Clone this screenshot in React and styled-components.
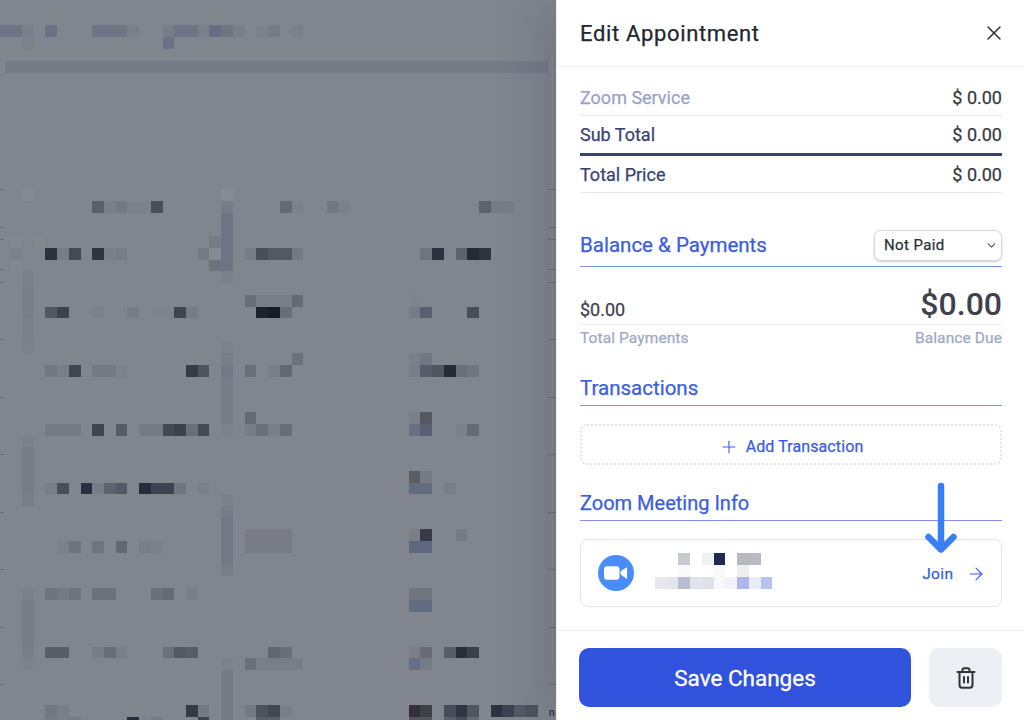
import React from "react";
import styled, { createGlobalStyle } from "styled-components";
import { ChevronDown, Plus, ArrowRight, X } from "lucide-react";

const Global = createGlobalStyle`
  html, body { margin: 0; padding: 0; height: 100%; overflow: hidden; }
  * { box-sizing: border-box; }
  body { font-family: Roboto, "Liberation Sans", sans-serif; background: #fff; -webkit-text-stroke: 0.25px currentColor; }
`;

const Page = styled.div`
  display: flex;
  width: 1024px;
  height: 720px;
  overflow: hidden;
`;
const Backdrop = styled.svg`
  display: block;
  flex: 0 0 556px;
  width: 556px;
  height: 720px;
  background: #81858e;
`;
const Panel = styled.aside`
  position: relative;
  flex: 0 0 468px;
  height: 720px;
  display: flex;
  flex-direction: column;
  background: #fff;
  border-left: 1px solid #eeeef0;
  box-shadow: -12px 0 48px rgba(30, 32, 50, 0.16);
`;
const Header = styled.header`
  flex: 0 0 67px;
  display: flex;
  align-items: center;
  justify-content: space-between;
  padding: 0 18px 0 23px;
  border-bottom: 1px solid #f1f2f4;
`;
const Title = styled.h1`
  margin: 0;
  font-size: 22px;
  font-weight: 400;
  letter-spacing: 0.65px;
  color: #23272e;
`;
const CloseButton = styled.button`
  display: flex;
  padding: 0;
  border: 0;
  background: none;
  color: #2b2f36;
`;
const Body = styled.div`
  flex: 1;
  padding: 12px 22px 0 23px;
`;
const PriceRow = styled.div`
  display: flex;
  align-items: center;
  justify-content: space-between;
  height: ${(p) => p.$h}px;
  font-size: 18px;
  font-weight: 400;
  color: ${(p) => p.$color};
  border-bottom: ${(p) => p.$rule};
`;
const Amount = styled.span`
  color: #363a42;
`;
const SectionHead = styled.div`
  display: flex;
  align-items: center;
  justify-content: space-between;
  height: ${(p) => p.$h}px;
  margin-top: ${(p) => p.$top}px;
  padding: ${(p) => p.$padTop}px 0 0;
  border-bottom: 1px solid #7a93ee;
  color: #3a5de0;
  font-size: ${(p) => p.$size}px;
  font-weight: 400;
`;
const StatusSelect = styled.div`
  width: 128px;
  height: 31px;
  display: flex;
  align-items: center;
  justify-content: space-between;
  padding: 0 3px 0 9px;
  border: 1px solid #d6d7dd;
  border-radius: 7px;
  box-shadow: 0 1px 2px rgba(40, 44, 60, 0.25);
  color: #2c3036;
  font-size: 15px;
  font-weight: 400;
  letter-spacing: 0.4px;
`;
const Totals = styled.div`
  display: flex;
  align-items: flex-end;
  justify-content: space-between;
  height: 58px;
  border-bottom: 1px solid #f0f1f3;
  color: #3d424c;
`;
const PaidAmount = styled.span`
  font-size: 18px;
  margin-bottom: 4px;
`;
const DueAmount = styled.span`
  font-size: 32px;
  font-weight: 500;
  line-height: 38px;
  margin-bottom: 1px;
  -webkit-text-stroke: 0;
`;
const Captions = styled.div`
  display: flex;
  justify-content: space-between;
  align-items: center;
  height: 28px;
  padding-bottom: 2px;
  color: #a0a8c8;
  font-size: 15.5px;
  font-weight: 400;
  letter-spacing: 0.1px;
`;
const AddBox = styled.div`
  display: flex;
  align-items: center;
  justify-content: center;
  gap: 7px;
  height: 41px;
  margin-top: 18px;
  padding: 4px 0 0 0;
  border: 2px dotted #e2e3e7;
  border-radius: 7px;
  color: #3a5de0;
  font-size: 16px;
  font-weight: 400;
  letter-spacing: 0.1px;
`;
const MeetingCard = styled.div`
  position: relative;
  display: flex;
  align-items: center;
  height: 68px;
  margin-top: 18px;
  padding: 0 17px;
  border: 1.5px solid #e4e5e9;
  border-radius: 8px;
`;
const ZoomBadge = styled.svg`
  flex: 0 0 36px;
  width: 36px;
  height: 36px;
`;
const BlurredName = styled.svg`
  flex: 0 0 118px;
  width: 118px;
  height: 36px;
  margin-left: 21px;
  margin-top: -5px;
`;
const JoinLink = styled.div`
  display: flex;
  align-items: center;
  gap: 12px;
  margin: 1px -1.5px 0 auto;
  color: #3a5de0;
  font-size: 15.5px;
  font-weight: 400;
  letter-spacing: 0.4px;
`;
const Pointer = styled.svg`
  position: absolute;
  left: 336px;
  top: -58px;
  width: 48px;
  height: 74px;
`;
const Footer = styled.footer`
  flex: 0 0 90px;
  display: flex;
  gap: 18px;
  padding: 17px 22px 13px 22px;
  border-top: 1px solid #f0f1f3;
`;
const SaveButton = styled.button`
  flex: 1;
  border: 0;
  border-radius: 10px;
  background: #3152dc;
  color: #fff;
  font: 400 22.5px Roboto, "Liberation Sans", sans-serif;
  -webkit-text-stroke: 0.3px #fff;
`;
const TrashButton = styled.button`
  flex: 0 0 73px;
  display: flex;
  align-items: center;
  justify-content: center;
  border: 0;
  border-radius: 10px;
  background: #eeeff4;
  color: #2f333b;
`;
const ClippedGlyph = styled.text`
  font: 500 10px Roboto, sans-serif;
  fill: #2a2e3a;
`;

const BG_CELLS = [
  [-15,-4,"#707586"],[-15,-3,"#707586"],[-15,-2,"#7b7f8b"],[-15,0,"#6c7186"],[-15,4,"#707586"],[-15,5,"#707586"],[-15,6,"#707586"],[-15,7,"#7b7f8b"],
  [-15,10,"#787d8a"],[-15,11,"#707586"],[-15,12,"#707586"],[-15,13,"#7b7f8b"],[-15,14,"#686d83"],[-15,15,"#707586"],[-15,16,"#7b7f8b"],[-15,18,"#7e818c"],[-15,19,"#767a89"],[-15,21,"#7c808b"],
  [-14,-2,"#7e828c"],[-14,10,"#6c7186"],
  [-1,-2,"#868a92"],[-1,15,"#888b93"],
  [0,4,"#5c5f69"],[0,5,"#7a7e87"],[0,6,"#747882"],[0,7,"#7e8189"],[0,8,"#7e8189"],[0,9,"#484d58"],[0,15,"#767b89"],[0,20,"#666a73"],[0,21,"#7d818a"],[0,24,"#747781"],[0,25,"#7d8089"],[0,37,"#5f626c"],[0,38,"#787b85"],[0,39,"#7a7c86"],
  [1,15,"#6f7484"],[2,15,"#6f7484"],
  [3,-3,"#84878f"],[3,-1,"#84878e"],[3,14,"#777b84"],[3,15,"#6f7484"],
  [4,-3,"#7d8189"],[4,0,"#2c3140"],[4,1,"#777b85"],[4,2,"#444954"],[4,4,"#2f3441"],[4,5,"#7b7f89"],[4,6,"#787c85"],[4,13,"#767a83"],[4,14,"#868a91"],[4,15,"#6f7484"],[4,17,"#787c85"],[4,18,"#4b4e5a"],[4,19,"#555862"],[4,20,"#555862"],[4,21,"#747882"],[4,32,"#717480"],[4,33,"#2d3240"],[4,35,"#5f626c"],[4,36,"#262a36"],[4,37,"#2f3340"],
  [5,-3,"#84878f"],[5,14,"#6f7380"],[5,15,"#6f7484"],
  [6,-2,"#7c808a"],[6,15,"#7c808b"],[7,-2,"#7a7e88"],
  [8,-2,"#7a7e88"],[8,17,"#6a6e78"],[8,18,"#7a7e87"],[8,19,"#7a7e87"],[8,20,"#7a7e87"],[8,21,"#666a74"],[8,31,"#80838c"],
  [9,-2,"#7a7e88"],[9,0,"#525762"],[9,1,"#3c414d"],[9,4,"#7e8189"],[9,7,"#787c86"],[9,9,"#7f838b"],[9,10,"#7f838b"],[9,11,"#3f444f"],[9,12,"#777b84"],[9,18,"#1e222d"],[9,19,"#171b26"],[9,20,"#6a6e78"],[9,31,"#787b85"],[9,32,"#5b606e"],[9,36,"#4a4e5a"],
  [10,-2,"#7c808a"],[11,-2,"#7c808a"],[12,-2,"#7e828c"],[12,15,"#7e828c"],
  [13,15,"#7a7e8a"],[13,21,"#6d717b"],[13,31,"#7b7f88"],[13,32,"#737683"],
  [14,0,"#73777f"],[14,1,"#7b7e87"],[14,2,"#3f4552"],[14,4,"#757982"],[14,5,"#757982"],[14,6,"#7e828a"],[14,12,"#353a48"],[14,13,"#4f535f"],[14,15,"#747886"],[14,17,"#6b6f79"],[14,19,"#7a7e87"],[14,20,"#646873"],[14,31,"#7a7d87"],[14,32,"#575c6b"],[14,33,"#4f5461"],[14,34,"#252a38"],[14,35,"#6b6f79"],[14,36,"#71757e"],
  [15,15,"#787c88"],[16,15,"#787c88"],[17,15,"#787c88"],
  [18,15,"#787c88"],[18,17,"#656973"],[18,31,"#7c7f88"],[18,32,"#55585f"],
  [19,0,"#767a83"],[19,1,"#767a83"],[19,2,"#767a83"],[19,4,"#3f4450"],[19,6,"#575b66"],[19,8,"#767a83"],[19,9,"#767a83"],[19,10,"#444854"],[19,11,"#3c414c"],[19,12,"#6a6e78"],[19,13,"#444955"],[19,15,"#7d818c"],[19,17,"#7a7d86"],[19,18,"#6b6f79"],[19,19,"#7b7e87"],[19,20,"#696d77"],[19,31,"#6a7086"],[19,32,"#5a5f71"],[19,35,"#7c8089"],[19,36,"#666a73"],
  [20,-2,"#7c808a"],[21,-2,"#787c88"],[22,-2,"#787c88"],[23,-2,"#787c88"],[25,-2,"#7a7e88"],
  [23,31,"#5a5c66"],[23,32,"#777a84"],
  [24,-2,"#787c88"],[24,0,"#797d86"],[24,1,"#4a4e5a"],[24,3,"#2b3040"],[24,4,"#787c85"],[24,5,"#5f636e"],[24,6,"#555965"],[24,8,"#262b3a"],[24,9,"#3e4350"],[24,10,"#3e4350"],[24,11,"#71757e"],[24,13,"#7c808a"],[24,31,"#616c7d"],[24,32,"#616c7d"],[24,34,"#797d85"],
  [25,15,"#7c808a"],[26,15,"#787c88"],[27,15,"#747886"],[28,15,"#747886"],
  [28,17,"#797c85"],[28,18,"#797c85"],[28,19,"#797c85"],[28,20,"#797c85"],[28,31,"#7b7e87"],[28,32,"#383b46"],[28,35,"#777a84"],
  [29,1,"#7d8089"],[29,2,"#6f737d"],[29,4,"#70747d"],[29,6,"#626770"],[29,8,"#7a7e87"],[29,9,"#7d8089"],[29,15,"#747886"],[29,17,"#797c85"],[29,18,"#797c85"],[29,19,"#797c85"],[29,20,"#797c85"],[29,31,"#5e6880"],[29,32,"#5e6880"],
  [30,15,"#747886"],[31,15,"#7a7e89"],
  [33,-2,"#7c808a"],[33,0,"#6f737c"],[33,1,"#767982"],[33,2,"#6e727b"],[33,4,"#6d7179"],[33,5,"#6d7179"],[33,9,"#6c7079"],[33,10,"#666a74"],[33,12,"#7a7e87"],[33,31,"#71747d"],[33,32,"#71747d"],
  [34,-2,"#787c88"],[34,31,"#616c80"],[34,32,"#616c80"],[35,-2,"#787c88"],[36,-2,"#787c88"],[37,-2,"#787c88"],
  [38,-2,"#7a7e89"],[38,0,"#595d68"],[38,1,"#595d68"],[38,4,"#797d85"],[38,5,"#696d76"],[38,6,"#7a7e87"],[38,10,"#6c7079"],[38,11,"#555965"],[38,12,"#595d69"],[38,19,"#62666f"],[38,20,"#6a6e77"],[38,31,"#7b7e8a"],[38,32,"#686c76"],[38,34,"#5a5d67"],[38,35,"#292e3c"],[38,36,"#3c404c"],
  [39,-2,"#7e828c"],[39,15,"#7e828c"],[39,17,"#6c7079"],[39,18,"#797d86"],[39,19,"#797d86"],[39,20,"#797d86"],[39,21,"#797d86"],[39,31,"#667089"],[39,32,"#767b88"],
  [40,15,"#777b87"],[41,15,"#777b87"],[42,15,"#777b87"],
  [43,0,"#72767f"],[43,1,"#7a7e87"],[43,12,"#353a47"],[43,13,"#757982"],[43,15,"#777b87"],[43,17,"#757982"],[43,18,"#4e525d"],[43,19,"#434752"],[43,20,"#7a7e87"],[43,31,"#342f38"],[43,32,"#3f3f48"],[43,34,"#484c58"],[43,35,"#2f3543"],[43,36,"#515560"],[43,38,"#2d3241"],[43,39,"#3d4250"],[43,40,"#555965"],[43,41,"#4e525d"],
  [44,0,"#787c85"],[44,1,"#7c8088"],[44,2,"#777b84"],[44,7,"#262a38"],[44,9,"#777b84"],[44,13,"#3f4451"],[44,15,"#777b87"],[44,18,"#5a5e68"],[44,19,"#5a5e68"],[44,31,"#55555c"],[44,32,"#55555c"],[44,34,"#5a5e68"],[44,35,"#4a4e5a"],[44,36,"#666a74"],
];
const TICKS = [189, 227, 239, 269, 282, 339, 397, 454, 512, 569, 627, 684];

const NAME_CELLS = [
  [678,552,"#c9cacd"],[702,552,"#f0f1f3"],[713.6,552,"#1f2a55"],[737,552,"#b7b9bf"],[749,552,"#b9bbc2"],
  [678,564,"#f9f9fa"],[713.6,564,"#f9f9fa"],[737,564,"#eeeef0"],
  [655,576,"#e7e8ee"],[667,576,"#e3e5eb"],[678,576,"#b8bdd2"],[690,576,"#e1e3ea"],[702,576,"#dfe1e8"],[713.6,576,"#f8f8fa"],[725,576,"#f3f4fb"],[737,576,"#b0b6ea"],[749,576,"#e9ebf9"],[760.5,576,"#b9c2f0"],
];

function BackdropArt() {
  return (
    <Backdrop viewBox="0 0 556 720" shapeRendering="crispEdges">
      <rect x="5" y="61" width="543" height="11.7" fill="#777b87" />
      {TICKS.map((y) => (
        <g key={y} fill="#696d76">
          <rect x="0" y={y} width="4" height="1" />
          <rect x="548" y={y} width="8" height="1" />
        </g>
      ))}
      {BG_CELLS.map(([r, c, fill]) => (
        <rect key={`${r}:${c}`} x={45.4 + 11.72 * c} y={201 + 11.73 * r} width="11.72" height="11.73" fill={fill} />
      ))}
      <ClippedGlyph x="549" y="716">n</ClippedGlyph>
    </Backdrop>
  );
}

const rows = [
  { label: "Zoom Service", color: "#9aa2c8", h: 37, rule: "1.5px solid #e6e9f2" },
  { label: "Sub Total", color: "#3a4272", h: 40, rule: "3px solid #3a4272" },
  { label: "Total Price", color: "#3a4272", h: 37, rule: "1.5px solid #e6e9f2" },
];

export default function App() {
  return (
    <Page>
      <Global />
      <BackdropArt />
      <Panel>
        <Header>
          <Title>Edit Appointment</Title>
          <CloseButton aria-label="Close"><X size={24} strokeWidth={1.5} /></CloseButton>
        </Header>
        <Body>
          {rows.map((r) => (
            <PriceRow key={r.label} $color={r.color} $h={r.h} $rule={r.rule}>
              <span>{r.label}</span>
              <Amount>$ 0.00</Amount>
            </PriceRow>
          ))}
          <SectionHead $h={74} $top={0} $padTop={31} $size={20.5}>
            <span>Balance &amp; Payments</span>
            <StatusSelect>
              Not Paid
              <ChevronDown size={13} strokeWidth={2} color="#555" />
            </StatusSelect>
          </SectionHead>
          <Totals>
            <PaidAmount>$0.00</PaidAmount>
            <DueAmount>$0.00</DueAmount>
          </Totals>
          <Captions>
            <span>Total Payments</span>
            <span>Balance Due</span>
          </Captions>
          <SectionHead $h={36} $top={17} $padTop={0} $size={20.5}>
            <span>Transactions</span>
          </SectionHead>
          <AddBox>
            <Plus size={20} strokeWidth={1.3} />
            Add Transaction
          </AddBox>
          <SectionHead $h={36} $top={20} $padTop={0} $size={20}>
            <span>Zoom Meeting Info</span>
          </SectionHead>
          <MeetingCard>
            <ZoomBadge viewBox="0 0 36 36">
              <circle cx="18" cy="18" r="18" fill="#4a8cf7" />
              <rect x="6" y="11.3" width="15.5" height="13.4" rx="3" fill="#fff" />
              <path d="M23 16.6 28.6 12.8V23.2L23 19.4Z" fill="#fff" stroke="#fff" strokeWidth="1" strokeLinejoin="round" />
            </ZoomBadge>
            <BlurredName viewBox="655 552 118 36" shapeRendering="crispEdges">
              {NAME_CELLS.map(([x, y, fill]) => (
                <rect key={`${x}:${y}`} x={x} y={y} width="11.8" height="12" fill={fill} />
              ))}
            </BlurredName>
            <JoinLink>
              Join
              <ArrowRight size={20} strokeWidth={1.4} />
            </JoinLink>
            <Pointer viewBox="0 0 48 74">
              <path d="M24 4V67.5M11.5 55 24 67.5 36.5 55" fill="none" stroke="#3a7ef5" strokeWidth="6.5" strokeLinecap="round" strokeLinejoin="round" />
            </Pointer>
          </MeetingCard>
        </Body>
        <Footer>
          <SaveButton>Save Changes</SaveButton>
          <TrashButton aria-label="Delete">
            <svg width="20" height="22" viewBox="0 0 20 22" fill="none" stroke="currentColor" strokeWidth="2" strokeLinecap="round" strokeLinejoin="round">
              <path d="M1.5 5H18.5" />
              <path d="M6.5 5V2.8C6.5 1.8 7.2 1.2 8.2 1.2H11.8C12.8 1.2 13.5 1.8 13.5 2.8V5" />
              <path d="M3.5 5V18C3.5 19.8 4.6 20.8 6.2 20.8H13.8C15.4 20.8 16.5 19.8 16.5 18V5" />
              <path d="M8 10V15.5M12 10V15.5" />
            </svg>
          </TrashButton>
        </Footer>
      </Panel>
    </Page>
  );
}
